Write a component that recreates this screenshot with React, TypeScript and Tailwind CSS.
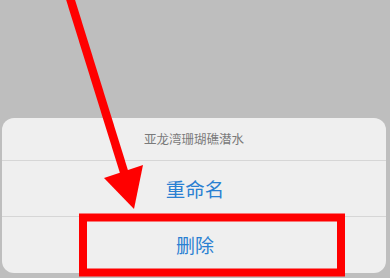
export default function App() {
  return (
    <div className="relative w-[390px] h-[278px] overflow-hidden bg-[#bebebe] flex flex-col justify-end px-[2px] pb-[5px] font-['Noto_Sans_CJK_SC',sans-serif]">
      <div className="w-[384px] rounded-[12px] bg-[#efefef] flex flex-col">
        <div className="h-[43px] flex items-center justify-center border-b border-[#d6d6d6] text-[12.5px] text-[#7a7a7a]">
          亚龙湾珊瑚礁潜水
        </div>
        <div className="h-[56px] flex items-center justify-center border-b border-[#d6d6d6] text-[19.5px] text-[#2a80d2] pl-[2px]">
          重命名
        </div>
        <div className="h-[56px] flex items-center justify-center text-[19px] text-[#2a80d2] pl-[2px]">
          删除
        </div>
      </div>

      {/* annotation overlay */}
      <svg className="absolute inset-0" width="390" height="278" viewBox="0 0 390 278">
        <line x1="70" y1="-2" x2="125" y2="175" stroke="#ff0000" strokeWidth="8.5" />
        <polygon points="104,178 143,165 134,209" fill="#ff0000" />
        <rect x="83" y="217.5" width="258" height="55" fill="none" stroke="#ff0000" strokeWidth="8" />
      </svg>
    </div>
  );
}
